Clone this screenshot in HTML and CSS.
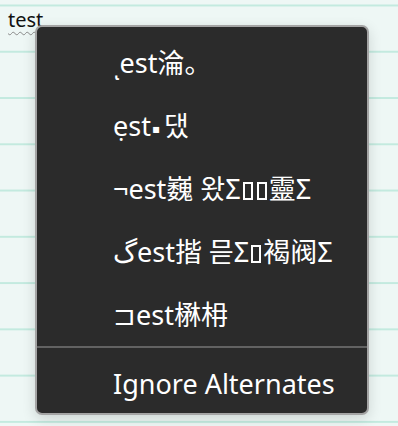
FILE: index.html
```html
<!DOCTYPE html>
<html lang="en">
<head>
	<meta charset="UTF-8">
	<title>Alternates</title>
	<link rel="stylesheet" href="styles.css">
</head>
<body>
<div id="page">
    <p class="line"><span class="word">test</span></p>

    <div class="menu">
        <ul class="alts">
            <li>ͺest淪。</li>
            <li>ẹst<span class="dot">▪</span>댔</li>
            <li>¬est巍 왔Σ<i class="tofu"></i><i class="tofu"></i>靈Σ</li>
            <li>گest揩 믇Σ<i class="tofu"></i>褐阀Σ</li>
            <li>⊐est楙枏</li>
        </ul>
        <div class="sep"></div>
        <div class="item">Ignore Alternates</div>
    </div>
    <!--/menu-->
</div>
</body>
</html>
```

FILE: styles.css
```css
html,body,p,ul,li {margin:0;padding:0;}
body {
	width:398px;
	height:426px;
	overflow:hidden;
	background-color:#eef7f5;
	background-image:linear-gradient(#c3eadf 0, #c3eadf 1.5px, transparent 1.5px);
	background-size:100% 46.28px;
	background-position:0 4.5px;
	font-family:"Noto Sans", "Noto Sans CJK SC", sans-serif;
}
#page {
	position:relative;
	height:426px;
}
.line {
	padding:6px 8px 0;
	font-size:20px;
	line-height:28px;
	color:#111;
}
.word {
	text-decoration:underline wavy #8a8a8a;
	text-decoration-thickness:1px;
	text-underline-offset:4px;
}
.menu {
	position:absolute;
	top:25px;
	left:35px;
	width:330px;
	padding-top:4px;
	background:#2b2b2b;
	border:2px solid #a4a4a4;
	border-radius:7px;
	box-shadow:0 4px 14px rgba(0,0,0,0.14);
	color:#fff;
	font-size:27px;
}
.alts li {
	list-style:none;
	height:63px;
	line-height:63px;
	padding-left:76px;
	white-space:nowrap;
}
.alts .dot {
	font-family:"DejaVu Sans", sans-serif;
	font-size:12px;
	margin:0 4px 0 1px;
	vertical-align:3px;
}
.alts .tofu {
	display:inline-block;
	width:10px;
	height:18px;
	margin:0 2px;
	border:2px solid #fff;
	box-sizing:border-box;
	vertical-align:-1px;
}
.sep {
	height:2px;
	margin-bottom:4px;
	background:#626262;
}
.item {
	height:61px;
	line-height:63px;
	padding-left:76px;
	white-space:nowrap;
}
```
